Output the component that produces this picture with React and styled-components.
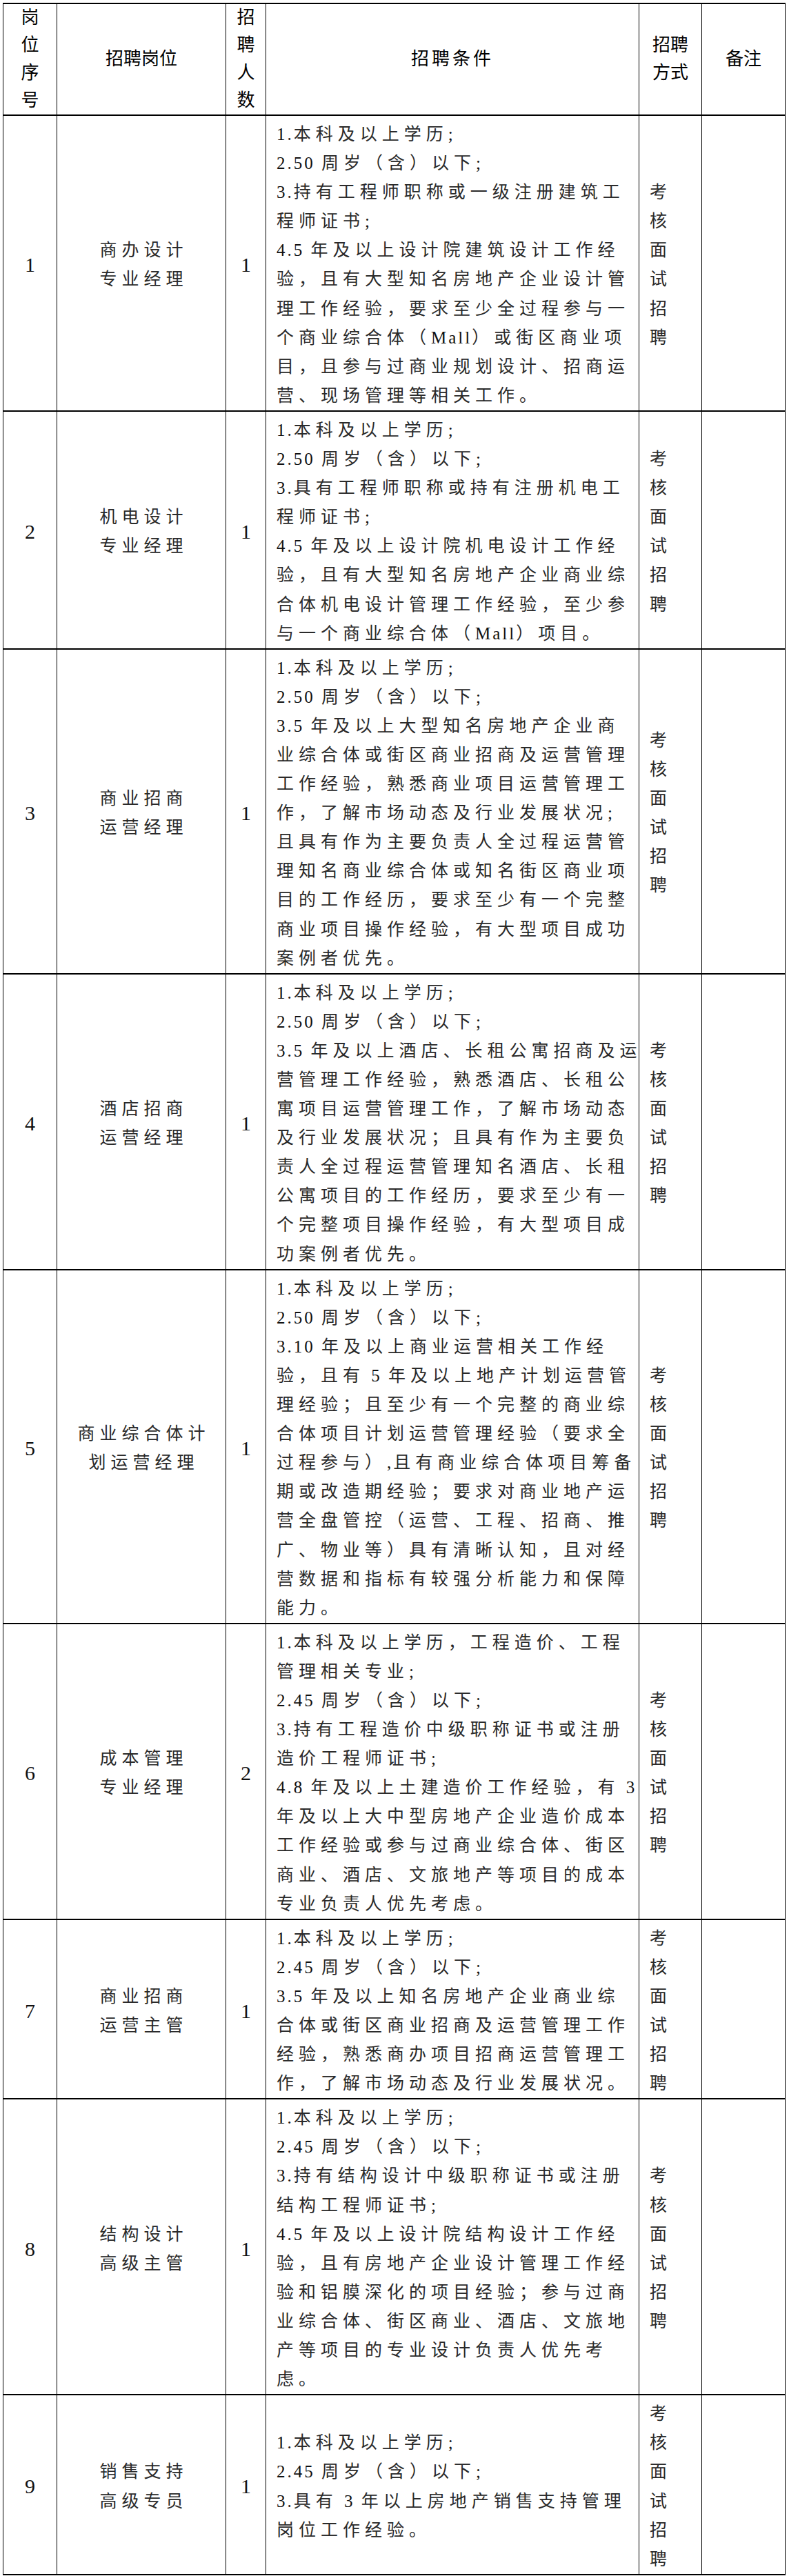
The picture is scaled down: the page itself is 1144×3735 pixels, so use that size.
import React from "react";
import styled, { createGlobalStyle } from "styled-components";

const GlobalStyle = createGlobalStyle`
  html, body { margin: 0; padding: 0; background: #ffffff; }
  body {
    font-family: "Liberation Serif", "Noto Sans CJK SC", serif;
    color: #111;
  }
`;

const Page = styled.div`
  padding: 4px 0 0 4px;
  width: 1144px;
  box-sizing: border-box;
`;

const Table = styled.table`
  border-collapse: collapse;
  table-layout: fixed;
  width: 1135px;
`;

const HeadCell = styled.th`
  border-top: 2px solid #000;
  border-bottom: 2px solid #000;
  border-left: 1px solid #000;
  border-right: 1px solid #000;
  padding: 0;
  font-family: "Liberation Serif", "Noto Sans CJK SC", serif;
  font-weight: 400;
  font-size: 26px;
  line-height: 40px;
  letter-spacing: ${(p) => p.$spacing || 0}px;
  text-align: center;
  vertical-align: middle;
  color: #000;
`;

const Cell = styled.td`
  border-top: 2px solid #000;
  border-bottom: 2px solid #000;
  border-left: 1px solid #000;
  border-right: 1px solid #000;
  padding: 6px 0 0 0;
  vertical-align: middle;
  font-size: 25px;
  line-height: 42.1px;
  color: #2a2a2a;
`;

const IdCell = styled(Cell)`
  text-align: center;
  font-size: 30px;
  color: #111;
`;

const TitleCell = styled(Cell)`
  text-align: center;
  letter-spacing: 7px;
  padding-left: 7px;
`;

const CountCell = styled(Cell)`
  text-align: center;
  font-size: 30px;
  color: #111;
`;

const CondCell = styled(Cell)`
  padding-left: 15px;
  padding-right: 10px;
  text-align: left;
  letter-spacing: 7px;
`;

const MethodCell = styled(Cell)`
  padding-left: 15px;
  text-align: left;
`;

const Line = styled.div`
  display: block;
  white-space: nowrap;
`;

const Latin = styled.span`
  letter-spacing: 3px;
  color: #111;
`;

const Glyph = styled.div`
  display: block;
`;

const columns = [78, 245, 58, 541, 91, 121];

const rows = [
  {
    id: "1",
    title: ["商办设计", "专业经理"],
    count: "1",
    lines: [
      "1.本科及以上学历;",
      "2.50 周岁（含）以下;",
      "3.持有工程师职称或一级注册建筑工",
      "程师证书;",
      "4.5 年及以上设计院建筑设计工作经",
      "验，且有大型知名房地产企业设计管",
      "理工作经验，要求至少全过程参与一",
      "个商业综合体（Mall）或街区商业项",
      "目，且参与过商业规划设计、招商运",
      "营、现场管理等相关工作。",
    ],
  },
  {
    id: "2",
    title: ["机电设计", "专业经理"],
    count: "1",
    lines: [
      "1.本科及以上学历;",
      "2.50 周岁（含）以下;",
      "3.具有工程师职称或持有注册机电工",
      "程师证书;",
      "4.5 年及以上设计院机电设计工作经",
      "验，且有大型知名房地产企业商业综",
      "合体机电设计管理工作经验，至少参",
      "与一个商业综合体（Mall）项目。",
    ],
  },
  {
    id: "3",
    title: ["商业招商", "运营经理"],
    count: "1",
    lines: [
      "1.本科及以上学历;",
      "2.50 周岁（含）以下;",
      "3.5 年及以上大型知名房地产企业商",
      "业综合体或街区商业招商及运营管理",
      "工作经验，熟悉商业项目运营管理工",
      "作，了解市场动态及行业发展状况;",
      "且具有作为主要负责人全过程运营管",
      "理知名商业综合体或知名街区商业项",
      "目的工作经历，要求至少有一个完整",
      "商业项目操作经验，有大型项目成功",
      "案例者优先。",
    ],
  },
  {
    id: "4",
    title: ["酒店招商", "运营经理"],
    count: "1",
    lines: [
      "1.本科及以上学历;",
      "2.50 周岁（含）以下;",
      "3.5 年及以上酒店、长租公寓招商及运",
      "营管理工作经验，熟悉酒店、长租公",
      "寓项目运营管理工作，了解市场动态",
      "及行业发展状况；且具有作为主要负",
      "责人全过程运营管理知名酒店、长租",
      "公寓项目的工作经历，要求至少有一",
      "个完整项目操作经验，有大型项目成",
      "功案例者优先。",
    ],
  },
  {
    id: "5",
    title: ["商业综合体计", "划运营经理"],
    count: "1",
    lines: [
      "1.本科及以上学历;",
      "2.50 周岁（含）以下;",
      "3.10 年及以上商业运营相关工作经",
      "验，且有 5 年及以上地产计划运营管",
      "理经验；且至少有一个完整的商业综",
      "合体项目计划运营管理经验（要求全",
      "过程参与）,且有商业综合体项目筹备",
      "期或改造期经验；要求对商业地产运",
      "营全盘管控（运营、工程、招商、推",
      "广、物业等）具有清晰认知，且对经",
      "营数据和指标有较强分析能力和保障",
      "能力。",
    ],
  },
  {
    id: "6",
    title: ["成本管理", "专业经理"],
    count: "2",
    lines: [
      "1.本科及以上学历，工程造价、工程",
      "管理相关专业;",
      "2.45 周岁（含）以下;",
      "3.持有工程造价中级职称证书或注册",
      "造价工程师证书;",
      "4.8 年及以上土建造价工作经验，有 3",
      "年及以上大中型房地产企业造价成本",
      "工作经验或参与过商业综合体、街区",
      "商业、酒店、文旅地产等项目的成本",
      "专业负责人优先考虑。",
    ],
  },
  {
    id: "7",
    title: ["商业招商", "运营主管"],
    count: "1",
    lines: [
      "1.本科及以上学历;",
      "2.45 周岁（含）以下;",
      "3.5 年及以上知名房地产企业商业综",
      "合体或街区商业招商及运营管理工作",
      "经验，熟悉商办项目招商运营管理工",
      "作，了解市场动态及行业发展状况。",
    ],
  },
  {
    id: "8",
    title: ["结构设计", "高级主管"],
    count: "1",
    lines: [
      "1.本科及以上学历;",
      "2.45 周岁（含）以下;",
      "3.持有结构设计中级职称证书或注册",
      "结构工程师证书;",
      "4.5 年及以上设计院结构设计工作经",
      "验，且有房地产企业设计管理工作经",
      "验和铝膜深化的项目经验；参与过商",
      "业综合体、街区商业、酒店、文旅地",
      "产等项目的专业设计负责人优先考",
      "虑。",
    ],
  },
  {
    id: "9",
    title: ["销售支持", "高级专员"],
    count: "1",
    lines: [
      "1.本科及以上学历;",
      "2.45 周岁（含）以下;",
      "3.具有 3 年以上房地产销售支持管理",
      "岗位工作经验。",
    ],
  },
];

const method = "考核面试招聘";

function RichLine({ text }) {
  const parts = text.split(/([\x20-\x7E]+)/);
  return (
    <Line>
      {parts.map((part, i) =>
        i % 2 === 1 ? <Latin key={i}>{part}</Latin> : <React.Fragment key={i}>{part}</React.Fragment>
      )}
    </Line>
  );
}

function Stacked({ text }) {
  return (
    <>
      {Array.from(text).map((ch, i) => (
        <Glyph key={i}>{ch}</Glyph>
      ))}
    </>
  );
}

export default function App() {
  return (
    <Page>
      <GlobalStyle />
      <Table>
        <colgroup>
          {columns.map((w, i) => (
            <col key={i} style={{ width: w }} />
          ))}
        </colgroup>
        <thead>
          <tr>
            <HeadCell>
              <Stacked text="岗位序号" />
            </HeadCell>
            <HeadCell>招聘岗位</HeadCell>
            <HeadCell>
              <Stacked text="招聘人数" />
            </HeadCell>
            <HeadCell $spacing={4}>招聘条件</HeadCell>
            <HeadCell>
              <Glyph>招聘</Glyph>
              <Glyph>方式</Glyph>
            </HeadCell>
            <HeadCell>备注</HeadCell>
          </tr>
        </thead>
        <tbody>
          {rows.map((row) => (
            <tr key={row.id}>
              <IdCell>{row.id}</IdCell>
              <TitleCell>
                {row.title.map((t, i) => (
                  <Line key={i}>{t}</Line>
                ))}
              </TitleCell>
              <CountCell>{row.count}</CountCell>
              <CondCell>
                {row.lines.map((l, i) => (
                  <RichLine key={i} text={l} />
                ))}
              </CondCell>
              <MethodCell>
                <Stacked text={method} />
              </MethodCell>
              <Cell />
            </tr>
          ))}
        </tbody>
      </Table>
    </Page>
  );
}
